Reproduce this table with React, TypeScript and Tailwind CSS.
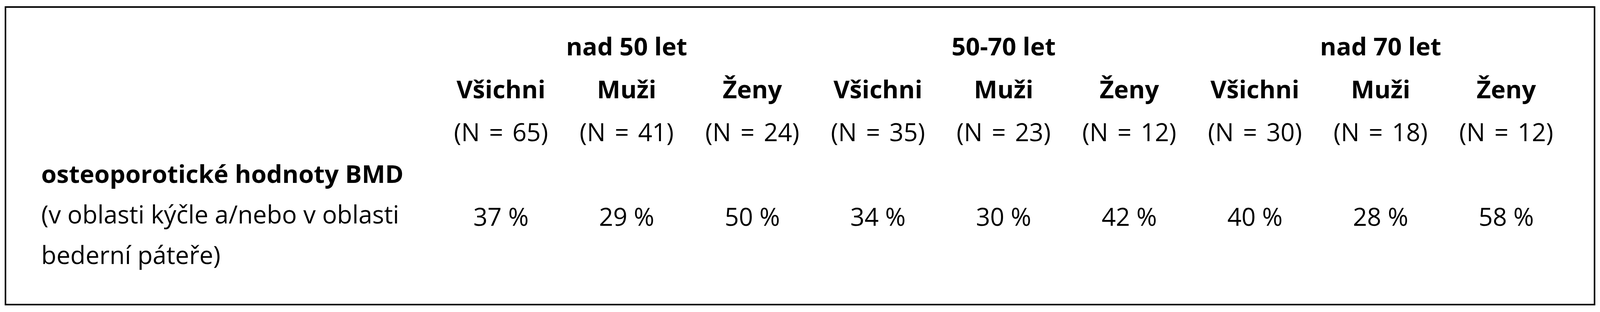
const groups = ["nad 50 let", "50-70 let", "nad 70 let"];

const columns = [
  { name: "Všichni", n: 65, value: 37 },
  { name: "Muži", n: 41, value: 29 },
  { name: "Ženy", n: 24, value: 50 },
  { name: "Všichni", n: 35, value: 34 },
  { name: "Muži", n: 23, value: 30 },
  { name: "Ženy", n: 12, value: 42 },
  { name: "Všichni", n: 30, value: 40 },
  { name: "Muži", n: 18, value: 28 },
  { name: "Ženy", n: 12, value: 58 },
];

export default function App() {
  return (
    <div className="min-h-screen bg-white pt-[16px] px-[12px] font-['Open_Sans',sans-serif] text-[1.55vw] text-black">
      <div className="h-[767px] border-4 border-black pt-[43px] pl-[2.2%] pr-[1.55%]">
        <div className="grid grid-cols-[1153fr_repeat(9,365fr)]">
          {/* group titles */}
          <div />
          {groups.map((g) => (
            <div key={g} className="col-span-3 text-center font-bold leading-[110px] whitespace-nowrap">
              {g}
            </div>
          ))}

          {/* column names */}
          <div />
          {columns.map((c, i) => (
            <div key={"name" + i} className="text-center font-bold leading-[110px] whitespace-nowrap">
              {c.name}
            </div>
          ))}

          {/* sample sizes */}
          <div />
          {columns.map((c, i) => (
            <div key={"n" + i} className="text-center leading-[110px] whitespace-nowrap [word-spacing:0.11em]">
              (N = {c.n})
            </div>
          ))}

          {/* data row */}
          <div className="leading-[104px] whitespace-nowrap">
            <span className="block font-bold">osteoporotické hodnoty BMD</span>
            <span className="block">(v oblasti kýčle a/nebo v oblasti</span>
            <span className="block">bederní páteře)</span>
          </div>
          {columns.map((c, i) => (
            <div key={"v" + i} className="self-center pt-3 text-center leading-[104px] whitespace-nowrap">
              {c.value} %
            </div>
          ))}
        </div>
      </div>
    </div>
  );
}
